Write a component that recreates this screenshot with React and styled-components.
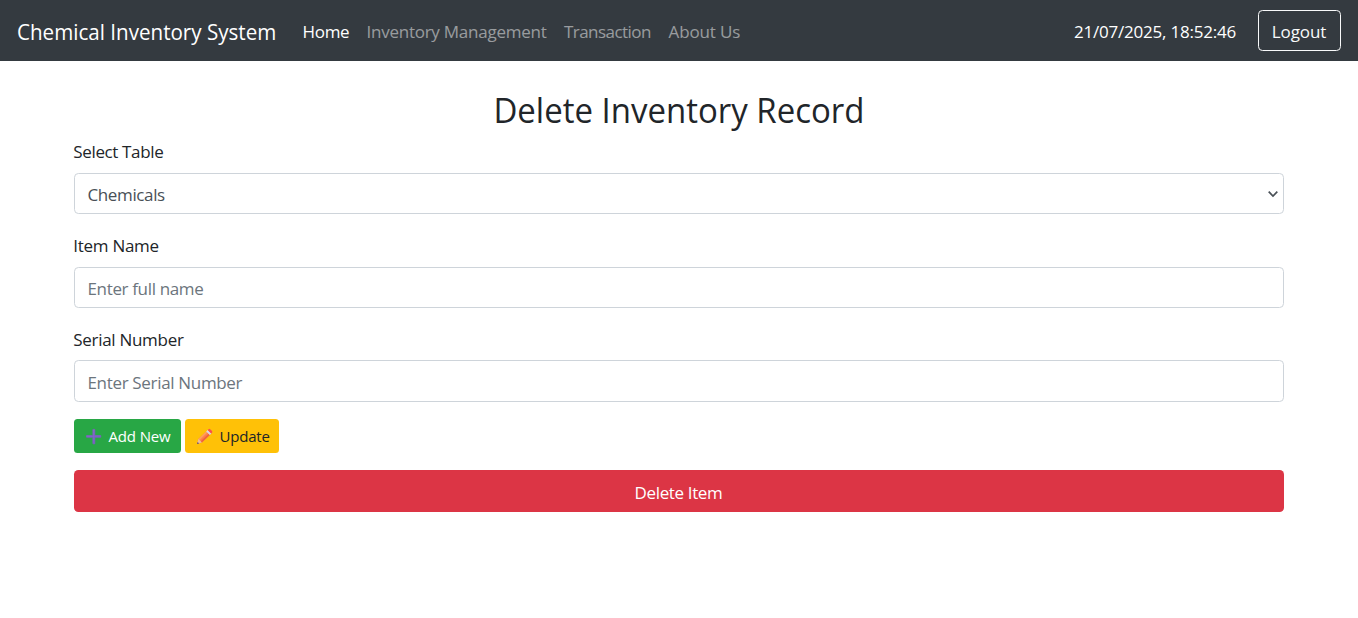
import React from "react";
import styled, { createGlobalStyle } from "styled-components";

const GlobalStyle = createGlobalStyle`
  *, *::before, *::after { box-sizing: border-box; }
  body {
    margin: 0;
    background: #fff;
    color: #212529;
    font-family: "Segoe UI", "Open Sans", "Noto Sans", sans-serif;
    font-size: 17px;
    line-height: 26.4px;
    overflow: hidden;
  }
  button { font: inherit; }
`;

const Text = styled.span`
  letter-spacing: ${(p) => p.$track || 0}px;
  white-space: nowrap;
`;

const Condensed = styled.span`
  display: inline-block;
  white-space: nowrap;
  transform: scaleX(${(p) => p.$scale});
  transform-origin: ${(p) => p.$origin || "center"};
`;

const Navbar = styled.nav`
  display: flex;
  align-items: center;
  height: 61px;
  padding: 3px 17px 0 17px;
  background: #343a40;
`;

const Brand = styled.a`
  margin-right: 26.5px;
  color: #fff;
  font-size: 22px;
  line-height: 31px;
  width: 259px;
  padding-bottom: 1px;
`;

const NavList = styled.div`
  display: flex;
  flex: 1;
  gap: 17.5px;
`;

const NavLink = styled.a`
  width: ${(p) => p.$width}px;
  color: ${(p) => (p.$active ? "#fff" : "rgba(255, 255, 255, 0.5)")};
`;

const Clock = styled.span`
  width: 162px;
  margin-right: 22px;
  color: #fff;
`;

const LogoutButton = styled.button`
  width: 83px;
  height: 41px;
  margin-top: -3px;
  padding: 3px 1px 0 0;
  border: 1px solid #f8f9fa;
  border-radius: 4.4px;
  background: transparent;
  color: #f8f9fa;
`;

const Container = styled.main`
  width: 1210px;
  margin: 0 0 0 74px;
  padding-top: 28px;
`;

const Title = styled.h2`
  margin: 0 0 8px;
  font-size: 35px;
  font-weight: 400;
  line-height: 42px;
  text-align: center;
`;

const Group = styled.div`
  height: ${(p) => p.$height}px;
  display: flex;
  flex-direction: column;
`;

const Label = styled.label`
  height: 26px;
  margin: 0 0 ${(p) => p.$gap || 8}px -0.7px;
`;

const Field = styled.div`
  display: flex;
  align-items: center;
  justify-content: space-between;
  height: ${(p) => p.$height || 41}px;
  padding: ${(p) => p.$top || 3}px 4px 0 12.5px;
  border: 1px solid #ced4da;
  border-radius: 4.4px;
  color: ${(p) => (p.$filled ? "#495057" : "#6c757d")};
`;

const Chevron = styled.svg`
  width: 12px;
  height: 8px;
  margin-top: -3px;
`;

const Actions = styled.div`
  display: flex;
  gap: 4px;
  margin-bottom: 17px;
`;

const SmallButton = styled.button`
  display: flex;
  align-items: center;
  width: ${(p) => p.$width}px;
  height: 34px;
  padding: 0 0 0 11px;
  border: 0;
  border-radius: 3.5px;
  background: ${(p) => p.$bg};
  color: ${(p) => p.$fg};
  font-size: 15px;
  gap: 6.5px;
`;

const Icon = styled.svg`
  width: 17px;
  height: 17px;
  flex: none;
`;

const DeleteButton = styled.button`
  width: 100%;
  height: 42px;
  padding: 4px 1px 0 0;
  border: 0;
  border-radius: 4.4px;
  background: #dc3545;
  color: #fff;
`;

function PlusIcon() {
  return (
    <Icon viewBox="0 0 17 17">
      <defs>
        <linearGradient id="plus" x1="0" y1="0" x2="1" y2="1">
          <stop offset="0" stopColor="#8d72c9" />
          <stop offset="1" stopColor="#7657d0" />
        </linearGradient>
      </defs>
      <path d="M7.900 1.400h1.900v6.200h5.900v1.600H9.800v6.600H7.900V9.200H1.500V7.600h6.400z" fill="url(#plus)" stroke="#7c62bd" strokeWidth=".8" strokeLinejoin="round" />
    </Icon>
  );
}

function PencilIcon() {
  return (
    <Icon viewBox="0 0 17 17">
      <path d="M1 16l1.500-5.200L10.200 3.400l3.600 3.500-7.900 7.500z" fill="#ff8048" />
      <path d="M2.500 10.800L10.200 3.400l1.200 1.100-7.700 7.500z" fill="#ffa05c" />
      <path d="M4.800 13.300l7.800-7.600 1.200 1.200-7.900 7.500z" fill="#ef6340" />
      <path d="M1 16l1.500-5.200 3.400 3.600z" fill="#edbd98" />
      <path d="M1 16l.6-2.100 1.500 1.500z" fill="#5a4a62" />
      <path d="M10.200 3.400l1.500-1.400 3.600 3.500-1.500 1.400z" fill="#d9d5e6" />
      <path d="M11.700 2l.8-.8q.8-.7 1.700 0l1.800 1.700q.8.9 0 1.800l-.8.8z" fill="#f9504f" />
    </Icon>
  );
}

export default function App() {
  return (
    <>
      <GlobalStyle />
      <Navbar>
        <Brand><Condensed $scale={0.936} $origin="left">Chemical Inventory System</Condensed></Brand>
        <NavList>
          <NavLink $active $width={46.5}><Text $track={-0.3}>Home</Text></NavLink>
          <NavLink $width={180}><Text $track={-0.25}>Inventory Management</Text></NavLink>
          <NavLink $width={87}><Text $track={-0.55}>Transaction</Text></NavLink>
          <NavLink $width={73}><Text $track={-0.12}>About Us</Text></NavLink>
        </NavList>
        <Clock><Text $track={-0.22}>21/07/2025, 18:52:46</Text></Clock>
        <LogoutButton><Text $track={-0.1}>Logout</Text></LogoutButton>
      </Navbar>
      <Container>
        <Title><Condensed $scale={0.942}>Delete Inventory Record</Condensed></Title>
        <Group $height={94}>
          <Label><Text $track={-0.36}>Select Table</Text></Label>
          <Field $filled>
            <Text $track={-0.38}>Chemicals</Text>
            <Chevron viewBox="0 0 12 8"><path d="M1.700 1.700L6 6l4.300-4.300" fill="none" stroke="#495057" strokeWidth="1.7" /></Chevron>
          </Field>
        </Group>
        <Group $height={94}>
          <Label><Text $track={-0.28}>Item Name</Text></Label>
          <Field><Text $track={-0.35}>Enter full name</Text></Field>
        </Group>
        <Group $height={92}>
          <Label $gap={7}><Text $track={-0.3}>Serial Number</Text></Label>
          <Field $height={42} $top={4}><Text $track={-0.33}>Enter Serial Number</Text></Field>
        </Group>
        <Actions>
          <SmallButton $width={107} $bg="#28a745" $fg="#fff"><PlusIcon /><Text $track={-0.15}>Add New</Text></SmallButton>
          <SmallButton $width={94} $bg="#ffc107" $fg="#212529"><PencilIcon /><Text $track={-0.2}>Update</Text></SmallButton>
        </Actions>
        <DeleteButton><Text $track={-0.37}>Delete Item</Text></DeleteButton>
      </Container>
    </>
  );
}
